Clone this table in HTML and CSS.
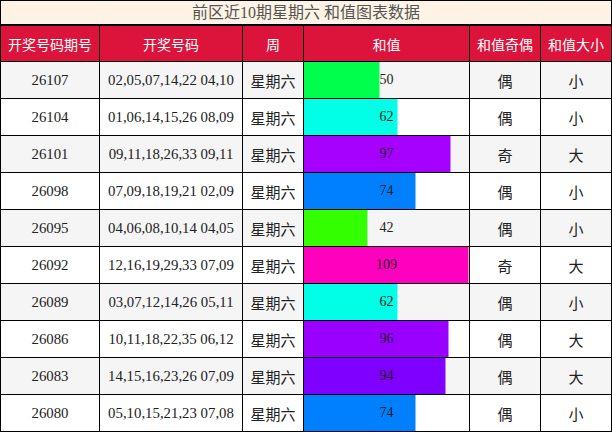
FILE: index.html
```html
<!DOCTYPE html>
<html lang="zh">
<head>
<meta charset="utf-8">
<title>前区近10期星期六 和值图表数据</title>
<link rel="stylesheet" href="styles.css">
</head>
<body>
<div class="board">
  <div class="title">前区近10期星期六 和值图表数据</div>
  <div class="th">开奖号码期号</div>
  <div class="th">开奖号码</div>
  <div class="th">周</div>
  <div class="th">和值</div>
  <div class="th">和值奇偶</div>
  <div class="th">和值大小</div>

  <div class="td odd">26107</div><div class="td odd">02,05,07,14,22 04,10</div><div class="td odd cn">星期六</div>
  <div class="td odd barcell"><div class="bar" style="width:45.87%;background:hsl(138,100%,50%)"></div><span class="val">50</span></div>
  <div class="td odd cn">偶</div><div class="td odd cn">小</div>

  <div class="td">26104</div><div class="td">01,06,14,15,26 08,09</div><div class="td cn">星期六</div>
  <div class="td barcell"><div class="bar" style="width:56.88%;background:hsl(174,100%,50%)"></div><span class="val">62</span></div>
  <div class="td cn">偶</div><div class="td cn">小</div>

  <div class="td odd">26101</div><div class="td odd">09,11,18,26,33 09,11</div><div class="td odd cn">星期六</div>
  <div class="td odd barcell"><div class="bar" style="width:88.99%;background:hsl(279,100%,50%)"></div><span class="val">97</span></div>
  <div class="td odd cn">奇</div><div class="td odd cn">大</div>

  <div class="td">26098</div><div class="td">07,09,18,19,21 02,09</div><div class="td cn">星期六</div>
  <div class="td barcell"><div class="bar" style="width:67.89%;background:hsl(210,100%,50%)"></div><span class="val">74</span></div>
  <div class="td cn">偶</div><div class="td cn">小</div>

  <div class="td odd">26095</div><div class="td odd">04,06,08,10,14 04,05</div><div class="td odd cn">星期六</div>
  <div class="td odd barcell"><div class="bar" style="width:38.53%;background:hsl(108,100%,50%)"></div><span class="val">42</span></div>
  <div class="td odd cn">偶</div><div class="td odd cn">小</div>

  <div class="td">26092</div><div class="td">12,16,19,29,33 07,09</div><div class="td cn">星期六</div>
  <div class="td barcell"><div class="bar" style="width:100%;background:hsl(315,100%,50%)"></div><span class="val">109</span></div>
  <div class="td cn">奇</div><div class="td cn">大</div>

  <div class="td odd">26089</div><div class="td odd">03,07,12,14,26 05,11</div><div class="td odd cn">星期六</div>
  <div class="td odd barcell"><div class="bar" style="width:56.88%;background:hsl(174,100%,50%)"></div><span class="val">62</span></div>
  <div class="td odd cn">偶</div><div class="td odd cn">小</div>

  <div class="td">26086</div><div class="td">10,11,18,22,35 06,12</div><div class="td cn">星期六</div>
  <div class="td barcell"><div class="bar" style="width:88.07%;background:hsl(276,100%,50%)"></div><span class="val">96</span></div>
  <div class="td cn">偶</div><div class="td cn">大</div>

  <div class="td odd">26083</div><div class="td odd">14,15,16,23,26 07,09</div><div class="td odd cn">星期六</div>
  <div class="td odd barcell"><div class="bar" style="width:86.24%;background:hsl(270,100%,50%)"></div><span class="val">94</span></div>
  <div class="td odd cn">偶</div><div class="td odd cn">大</div>

  <div class="td">26080</div><div class="td">05,10,15,21,23 07,08</div><div class="td cn">星期六</div>
  <div class="td barcell"><div class="bar" style="width:67.89%;background:hsl(210,100%,50%)"></div><span class="val">74</span></div>
  <div class="td cn">偶</div><div class="td cn">小</div>
</div>
</body>
</html>
```

FILE: styles.css
```css
html, body {
  margin: 0;
  padding: 0;
  background: #fff;
}

.board {
  width: 612px;
  height: 432px;
  box-sizing: border-box;
  background: #000;
  padding: 1px;
  display: grid;
  grid-template-columns: 98px 142px 60px 165px 70px 70px;
  grid-template-rows: 24px 35px repeat(10, 36px);
  gap: 1px;
  font-family: "Liberation Serif", "Noto Sans CJK SC", serif;
}

.title {
  grid-column: 1 / -1;
  background: #fef3e4;
  border-bottom: 1px solid #000;
  color: #555;
  font-size: 16px;
  display: flex;
  align-items: center;
  justify-content: center;
  line-height: 1;
}

.th {
  background: #dc143c;
  color: #fff;
  font-family: "Noto Sans CJK SC", sans-serif;
  font-size: 14px;
  display: flex;
  align-items: center;
  justify-content: center;
}

.td {
  background: #fff;
  color: #222;
  font-size: 14.8px;
  display: flex;
  align-items: center;
  justify-content: center;
  white-space: nowrap;
}

.td.odd {
  background: #f5f5f5;
}

.td.cn {
  font-family: "Noto Sans CJK SC", sans-serif;
  font-size: 15px;
}

.td.barcell {
  display: grid;
  grid-template-columns: 100%;
  grid-template-rows: 100%;
  align-items: stretch;
  justify-items: start;
}

.bar {
  grid-area: 1 / 1;
  height: 100%;
  box-shadow: inset -1px 0 rgba(255, 255, 255, 0.5);
}

.val {
  grid-area: 1 / 1;
  justify-self: center;
  align-self: center;
  font-size: 14px;
  color: #222;
}
```
